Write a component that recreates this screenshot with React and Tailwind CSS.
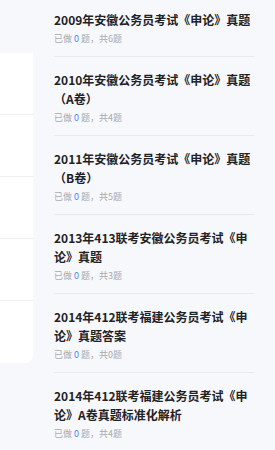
import React from "react";

const papers = [
  { title: "2009年安徽公务员考试《申论》真题", total: 6 },
  { title: "2010年安徽公务员考试《申论》真题（A卷）", total: 4 },
  { title: "2011年安徽公务员考试《申论》真题（B卷）", total: 5 },
  { title: "2013年413联考安徽公务员考试《申论》真题", total: 3 },
  { title: "2014年412联考福建公务员考试《申论》真题答案", total: 0 },
  { title: "2014年412联考福建公务员考试《申论》A卷真题标准化解析", total: 4 },
];

const App = () => {
  return (
    <div
      className="flex h-[450px] w-[275px] overflow-hidden bg-[#f7f8fc]"
      style={{ fontFamily: '"Noto Sans CJK SC", "Noto Sans", sans-serif' }}
    >
      {/* Left categories */}
      <div className="flex w-[33px] flex-shrink-0 flex-col">
        <div className="h-[53px]" />
        <div className="flex flex-col rounded-br-lg bg-white">
          {[0, 1, 2, 3, 4].map((i) => (
            <div
              key={i}
              className={`h-[62px] ${i < 4 ? "border-b border-[#eeeff3]" : ""}`}
            />
          ))}
        </div>
      </div>

      {/* Paper list */}
      <div className="flex-1 pl-[21px]">
        <div className="w-[200px]">
          {papers.map((paper, index) => (
            <div
              key={index}
              className={`border-b border-[#e8e9ee] pb-[10px] ${
                index === 0 ? "pt-[10px]" : "pt-[13px]"
              }`}
            >
              <div className="text-[12px] font-semibold leading-[19px] text-[#222326]">
                {paper.title}
              </div>
              <div className="mt-[3px] text-[9px] leading-[14px] text-[#a8aab0]">
                已做 <span className="text-[#4a8af4]">0</span> 题，共{paper.total}题
              </div>
            </div>
          ))}
        </div>
      </div>
    </div>
  );
};

export default App;
